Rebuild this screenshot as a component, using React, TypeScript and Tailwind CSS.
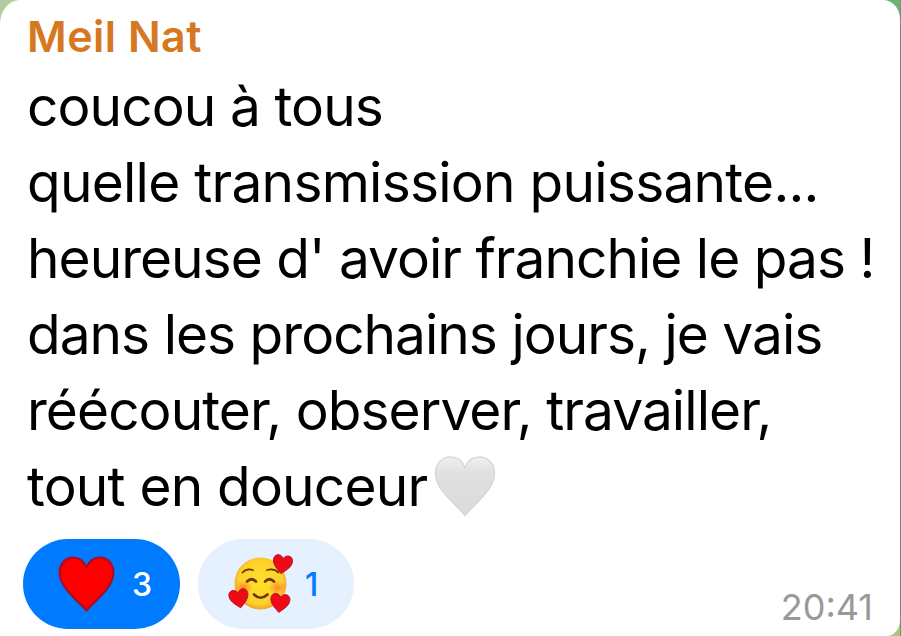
const LINES = [
  { text: 'coucou à tous', tracking: 'tracking-[-0.9px]' },
  { text: 'quelle transmission puissante...', tracking: 'tracking-[-0.74px]' },
  { text: "heureuse d' avoir franchie le pas !", tracking: 'tracking-[-0.98px]' },
  { text: 'dans les prochains jours, je vais', tracking: 'tracking-[-0.98px]' },
  { text: 'réécouter, observer, travailler,', tracking: 'tracking-[-0.93px]' },
  { text: 'tout en douceur', tracking: 'tracking-[-0.8px]', heart: true },
];

function WhiteHeart() {
  return (
    <svg className="ml-[7px] mt-[7px] h-[62px] w-[62px] shrink-0" viewBox="0 0 62 62">
      <defs>
        <linearGradient id="whiteFill" x1="0" y1="0" x2="0" y2="1">
          <stop offset="0" stopColor="#f0f0f0" />
          <stop offset="0.28" stopColor="#e0e0e0" />
          <stop offset="1" stopColor="#dadada" />
        </linearGradient>
      </defs>
      <path
        d="M31 60.500C27.500 56 18 47.500 10.500 38.500C4.500 31.500 1.500 26 1.500 18.500C1.500 8.500 8 2 16.500 2C23.500 2 28.500 6 31 12.500C33.500 6 38.500 2 45.500 2C54 2 60.500 8.500 60.500 18.500C60.500 26 57.500 31.500 51.500 38.500C44 47.500 34.500 56 31 60.500Z"
        fill="url(#whiteFill)"
        stroke="#d8d8d8"
        strokeWidth="1.500"
      />
    </svg>
  );
}

function RedHeart() {
  return (
    <svg className="h-[56px] w-[57px] shrink-0" viewBox="0 0 57 56">
      <defs>
        <radialGradient id="redFill" cx="0.5" cy="0.42" r="0.6">
          <stop offset="0.75" stopColor="#ff0000" />
          <stop offset="1" stopColor="#d80012" />
        </radialGradient>
      </defs>
      <path
        d="M28.500 54.500C25 50.500 16 42.500 9 34C4 28 1.500 23.500 1.500 16.500C1.500 7.500 7.500 1.500 15 1.500C21.500 1.500 26 5.500 28.500 11C31 5.500 35.500 1.500 42 1.500C49.500 1.500 55.500 7.500 55.500 16.500C55.500 23.500 53 28 48 34C41 42.500 32 50.500 28.500 54.500Z"
        fill="url(#redFill)"
        stroke="#a80c24"
        strokeWidth="2"
      />
    </svg>
  );
}

function SmilingFace() {
  return (
    <svg className="h-[60px] w-[66px] shrink-0" viewBox="0 0 66 60">
      <defs>
        <radialGradient id="face" cx="0.5" cy="0.47" r="0.53">
          <stop offset="0" stopColor="#ffe02a" />
          <stop offset="0.8" stopColor="#fdd02c" />
          <stop offset="1" stopColor="#f5a02c" />
        </radialGradient>
        <radialGradient id="blush">
          <stop offset="0" stopColor="#ff6a2b" stopOpacity="0.75" />
          <stop offset="1" stopColor="#ff7a2b" stopOpacity="0" />
        </radialGradient>
        <path
          id="smallHeart"
          d="M10 19C7 16 1 12 .5 6.500C.2 2.500 2.500.5 5 .5C7.500.5 9.200 2 10 4C10.800 2 12.500.5 15 .5C17.500.5 19.800 2.500 19.500 6.500C19 12 13 16 10 19Z"
          fill="#ee0a16"
          stroke="#b80d24"
          strokeWidth="0.9"
        />
      </defs>
      <circle cx="32.500" cy="29.500" r="26" fill="url(#face)" />
      <ellipse cx="15.500" cy="33.500" rx="9" ry="7" fill="url(#blush)" />
      <ellipse cx="49.500" cy="33.500" rx="9" ry="7" fill="url(#blush)" />
      <g fill="none" stroke="#6b3608" strokeLinecap="round">
        <path d="M14.500 18.500Q18.500 14 25 16" strokeWidth="1.800" />
        <path d="M39 16Q46 14 50.500 18.500" strokeWidth="1.800" />
        <path d="M19 27.500Q23.500 23 28 27.500" strokeWidth="2.600" />
        <path d="M37 27.500Q41.500 23 46 27.500" strokeWidth="2.600" />
        <path d="M26 40.500Q32.500 47 39.500 40.500" strokeWidth="2.600" />
      </g>
      <use href="#smallHeart" transform="translate(44.500 .8) rotate(8 10 9)" />
      <use href="#smallHeart" transform="translate(1 35) rotate(-10 10 9)" />
      <use href="#smallHeart" transform="translate(42 39.500) rotate(7 10 9)" />
    </svg>
  );
}

export default function App() {
  return (
    <div className="h-[636px] w-[901px] overflow-hidden border-r border-[#858585] bg-[linear-gradient(135deg,#b2cca0_0%,#a9c58d_20%,#55aa70_50%,#a3c97c_80%)] font-['Inter',sans-serif]">
      <div className="flex h-[636px] w-[900px] flex-col rounded-tl-[20px_24px] rounded-tr-[17px_19px] rounded-br-[13px_16px] bg-white">
        <h1 className="h-[68px] pl-[27px] pt-[10px] text-[43px] leading-[52px] font-semibold text-[#d67722]">
          <span className="inline-block tracking-[0.5px]">Meil Nat</span>
        </h1>
        <div className="pl-[27px] text-[55px] leading-[76px] text-black">
          {LINES.map((line) => (
            <p key={line.text} className="flex h-[76px] whitespace-nowrap">
              <span className={line.tracking}>{line.text}</span>
              {line.heart && <WhiteHeart />}
            </p>
          ))}
        </div>
        <div className="flex h-[112px] items-start justify-between pl-[23px] pr-[27px] pt-[15px]">
          <div className="flex gap-[18px]">
            <button className="flex h-[90px] w-[157px] items-center rounded-full bg-[#007aff] pl-[35px] text-white">
              <RedHeart />
              <span className="ml-[17px] mt-px text-[32px] leading-[40px] font-medium">3</span>
            </button>
            <button className="flex h-[90px] w-[156px] items-center rounded-full bg-[#e5f1fe] pl-[30px] text-[#007aff]">
              <SmilingFace />
              <span className="ml-[11px] mt-px text-[32px] leading-[40px] font-medium">1</span>
            </button>
          </div>
          <time className="mt-[46px] text-[36px] leading-[44px] text-[#999999]">20:41</time>
        </div>
      </div>
    </div>
  );
}
